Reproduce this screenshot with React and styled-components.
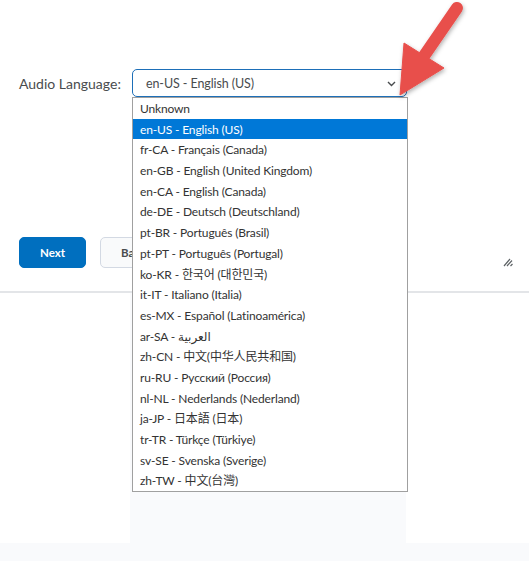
import React from 'react'
import styled, { createGlobalStyle } from 'styled-components'

const GlobalStyle = createGlobalStyle`
  html, body {
    margin: 0;
    padding: 0;
    background: #ffffff;
  }
  body {
    font-family: Lato, "Noto Sans", "Noto Sans CJK SC", sans-serif;
    color: #494c4e;
  }
`

const languages = [
  'Unknown',
  'en-US - English (US)',
  'fr-CA - Français (Canada)',
  'en-GB - English (United Kingdom)',
  'en-CA - English (Canada)',
  'de-DE - Deutsch (Deutschland)',
  'pt-BR - Português (Brasil)',
  'pt-PT - Português (Portugal)',
  'ko-KR - 한국어 (대한민국)',
  'it-IT - Italiano (Italia)',
  'es-MX - Español (Latinoamérica)',
  'ar-SA - العربية',
  'zh-CN - 中文(中华人民共和国)',
  'ru-RU - Русский (Россия)',
  'nl-NL - Nederlands (Nederland)',
  'ja-JP - 日本語 (日本)',
  'tr-TR - Türkçe (Türkiye)',
  'sv-SE - Svenska (Sverige)',
  'zh-TW - 中文(台灣)',
]

const Page = styled.div`
  position: relative;
  width: 529px;
  height: 561px;
  display: flex;
  flex-direction: column;
  overflow: hidden;
`

const Panel = styled.div`
  height: 293px;
  padding: 69px 0 0 19px;
  box-sizing: border-box;
  border-bottom: 2px solid #e3e5e8;
  box-shadow: 0 2px 3px rgba(0, 0, 0, 0.04);
  display: flex;
  flex-direction: column;
`

const FormRow = styled.div`
  display: flex;
  align-items: center;
  height: 28px;
`

const Label = styled.label`
  font-size: 14px;
  color: #494c4e;
  width: 113px;
`

const SelectWrap = styled.div`
  position: relative;
  z-index: 2;
`

const SelectBox = styled.div`
  width: 275px;
  height: 28px;
  box-sizing: border-box;
  border: 1px solid #1d6fb8;
  border-radius: 5px;
  display: flex;
  align-items: center;
  justify-content: space-between;
  padding: 0 10px 0 13px;
  font-size: 12.5px;
  letter-spacing: -0.1px;
  color: #494c4e;
  background: #fff;
`

const Chevron = styled.svg`
  width: 9px;
  height: 6px;
  margin-top: 2px;
`

const ListBox = styled.ul`
  position: absolute;
  top: 28px;
  left: 0;
  width: 276px;
  margin: 0;
  padding: 0;
  list-style: none;
  box-sizing: border-box;
  border: 1px solid #a0a0a0;
  background: #fff;
`

const Option = styled.li`
  height: 20.7px;
  line-height: 21.5px;
  padding-left: 7px;
  font-size: 12px;
  letter-spacing: -0.15px;
  white-space: nowrap;
  color: ${p => (p.$selected ? '#ffffff' : '#333333')};
  background: ${p => (p.$selected ? '#0078d7' : 'transparent')};
  font-family: Lato, "Noto Sans CJK SC", "DejaVu Sans", sans-serif;
`

const ButtonRow = styled.div`
  margin-top: 140px;
  display: flex;
  align-items: center;
  gap: 14px;
  padding-right: 16px;
`

const Button = styled.button`
  height: 31px;
  min-width: ${p => p.$width}px;
  box-sizing: border-box;
  border-radius: 5px;
  font-family: Lato, sans-serif;
  font-weight: 700;
  font-size: 11.5px;
  padding: 0 20px;
  text-align: left;
  border: 1px solid ${p => (p.$primary ? '#006fbf' : '#d3d9e3')};
  background: ${p => (p.$primary ? '#006fbf' : '#f9fafb')};
  color: ${p => (p.$primary ? '#ffffff' : '#494c4e')};
  ${p => p.$primary && 'text-align: center; padding: 0;'}
`

const Resize = styled.svg`
  margin-left: auto;
  width: 10px;
  height: 10px;
  margin-top: 18px;
`

const Lower = styled.div`
  flex: 1;
  display: grid;
  grid-template-columns: 130px 276px 1fr;
`

const Column = styled.div`
  background: ${p => (p.$shaded ? '#f9fafc' : '#ffffff')};
`

const Footer = styled.div`
  height: 18px;
  background: #f9fafc;
`

const Arrow = styled.svg`
  position: absolute;
  left: 360px;
  top: 0;
  width: 120px;
  height: 110px;
  z-index: 3;
  pointer-events: none;
`

export default function App() {
  return (
    <Page>
      <GlobalStyle />
      <Panel>
        <FormRow>
          <Label>Audio Language:</Label>
          <SelectWrap>
            <SelectBox>
              <span>en-US - English (US)</span>
              <Chevron viewBox="0 0 9 6">
                <path d="M1 1 L4.5 4.5 L8 1" fill="none" stroke="#494c4e" strokeWidth="1.4" />
              </Chevron>
            </SelectBox>
            <ListBox>
              {languages.map((lang, i) => (
                <Option key={lang} $selected={i === 1}>
                  {lang}
                </Option>
              ))}
            </ListBox>
          </SelectWrap>
        </FormRow>
        <ButtonRow>
          <Button $primary $width={67}>Next</Button>
          <Button $width={70}>Back</Button>
          <Resize viewBox="0 0 10 10">
            <path d="M1 9 L7 2 M4 9 L9 3.5 M7.5 9 L9.5 7" stroke="#5e6366" strokeWidth="1.2" fill="none" />
          </Resize>
        </ButtonRow>
      </Panel>
      <Lower>
        <Column />
        <Column $shaded />
        <Column />
      </Lower>
      <Footer />
      <Arrow viewBox="360 0 120 110">
        <defs>
          <filter id="shadow" x="-30%" y="-30%" width="160%" height="160%">
            <feDropShadow dx="1" dy="2" stdDeviation="2" floodColor="#000" floodOpacity="0.3" />
          </filter>
        </defs>
        <g filter="url(#shadow)" fill="#e8504c" stroke="#e8504c">
          <line x1="457" y1="8" x2="424" y2="56" strokeWidth="12" strokeLinecap="round" />
          <polygon points="400,95 404,43 444,68" strokeWidth="1" strokeLinejoin="round" />
        </g>
      </Arrow>
    </Page>
  )
}
